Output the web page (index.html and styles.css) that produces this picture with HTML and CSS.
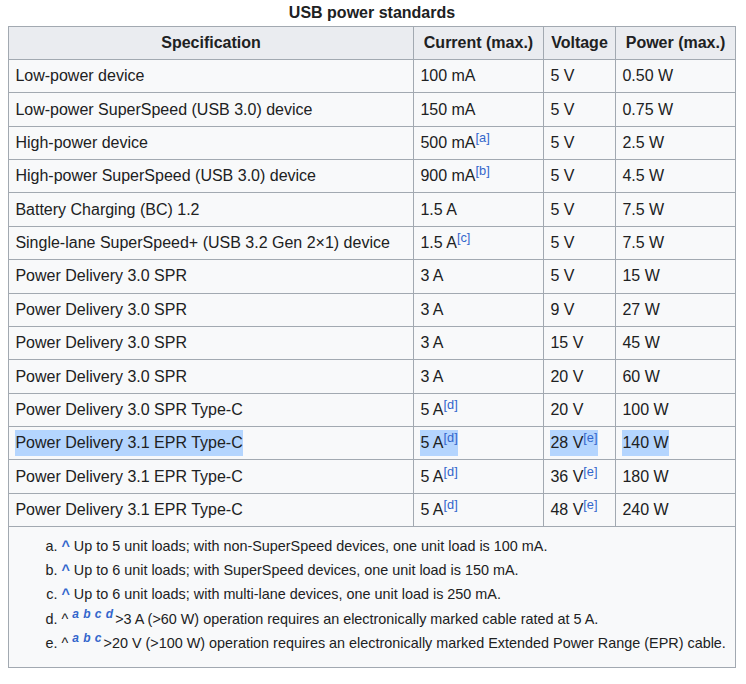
FILE: index.html
```html
<!DOCTYPE html>
<html>
<head>
<meta charset="utf-8">
<link rel="stylesheet" href="styles.css">
</head>
<body>
<table class="wikitable">
  <caption>USB power standards</caption>
  <thead>
    <tr>
      <th class="c1">Specification</th>
      <th class="c2">Current (max.)</th>
      <th class="c3">Voltage</th>
      <th class="c4">Power (max.)</th>
    </tr>
  </thead>
  <tbody>
    <tr><td>Low-power device</td><td>100 mA</td><td>5 V</td><td>0.50 W</td></tr>
    <tr><td>Low-power SuperSpeed (USB 3.0) device</td><td>150 mA</td><td>5 V</td><td>0.75 W</td></tr>
    <tr><td>High-power device</td><td>500 mA<sup class="ref">[a]</sup></td><td>5 V</td><td>2.5 W</td></tr>
    <tr><td>High-power SuperSpeed (USB 3.0) device</td><td>900 mA<sup class="ref">[b]</sup></td><td>5 V</td><td>4.5 W</td></tr>
    <tr><td>Battery Charging (BC) 1.2</td><td>1.5 A</td><td>5 V</td><td>7.5 W</td></tr>
    <tr><td>Single-lane SuperSpeed+ (USB 3.2 Gen 2×1) device</td><td>1.5 A<sup class="ref">[c]</sup></td><td>5 V</td><td>7.5 W</td></tr>
    <tr><td>Power Delivery 3.0 SPR</td><td>3 A</td><td>5 V</td><td>15 W</td></tr>
    <tr><td>Power Delivery 3.0 SPR</td><td>3 A</td><td>9 V</td><td>27 W</td></tr>
    <tr><td>Power Delivery 3.0 SPR</td><td>3 A</td><td>15 V</td><td>45 W</td></tr>
    <tr><td>Power Delivery 3.0 SPR</td><td>3 A</td><td>20 V</td><td>60 W</td></tr>
    <tr><td>Power Delivery 3.0 SPR Type-C</td><td>5 A<sup class="ref">[d]</sup></td><td>20 V</td><td>100 W</td></tr>
    <tr><td><span class="sel">Power Delivery 3.1 EPR Type-C</span></td><td><span class="sel">5 A<sup class="ref">[d]</sup></span></td><td><span class="sel">28 V<sup class="ref">[e]</sup></span></td><td><span class="sel">140 W</span></td></tr>
    <tr><td>Power Delivery 3.1 EPR Type-C</td><td>5 A<sup class="ref">[d]</sup></td><td>36 V<sup class="ref">[e]</sup></td><td>180 W</td></tr>
    <tr><td>Power Delivery 3.1 EPR Type-C</td><td>5 A<sup class="ref">[d]</sup></td><td>48 V<sup class="ref">[e]</sup></td><td>240 W</td></tr>
  </tbody>
  <tfoot>
    <tr>
      <td colspan="4" class="notes-cell">
        <ol class="notes">
          <li><span class="caret">^</span> Up to 5 unit loads; with non-SuperSpeed devices, one unit load is 100 mA.</li>
          <li><span class="caret">^</span> Up to 6 unit loads; with SuperSpeed devices, one unit load is 150 mA.</li>
          <li><span class="caret">^</span> Up to 6 unit loads; with multi-lane devices, one unit load is 250 mA.</li>
          <li>^ <sup class="back">a b c d</sup>&gt;3 A (&gt;60 W) operation requires an electronically marked cable rated at 5 A.</li>
          <li>^ <sup class="back">a b c</sup>&gt;20 V (&gt;100 W) operation requires an electronically marked Extended Power Range (EPR) cable.</li>
        </ol>
      </td>
    </tr>
  </tfoot>
</table>
</body>
</html>
```

FILE: styles.css
```css
html, body {
  margin: 0;
  padding: 0;
  background: #ffffff;
}
body {
  margin: 0 8px;
  font-family: "Liberation Sans", Arial, sans-serif;
  font-size: 16px;
  color: #202122;
}
.wikitable {
  border-collapse: collapse;
  table-layout: fixed;
  width: 727px;
  background: #f8f9fa;
  color: #202122;
  border: 1px solid #a2a9b1;
}
.wikitable caption {
  font-weight: bold;
  line-height: 25.6px;
  text-align: center;
}
.wikitable th,
.wikitable td {
  box-sizing: border-box;
  border: 1px solid #a2a9b1;
  padding: 3.2px 6.4px;
  line-height: 26px;
  text-align: left;
  vertical-align: middle;
}
.wikitable th {
  background: #eaecf0;
  font-weight: bold;
  text-align: center;
}
.c1 { width: 405px; }
.c2 { width: 130px; }
.c3 { width: 72px; }
.c4 { width: 120px; }
.ref {
  font-size: 12.8px;
  line-height: 1;
  color: #3366cc;
  vertical-align: super;
}
.sel {
  display: inline-block;
  background: #b4d5fe;
  line-height: 26px;
}
.wikitable .notes-cell {
  padding: 3.2px 6.4px 8px;
}
.notes {
  list-style-type: lower-alpha;
  margin: 4.3px 0 4px 46px;
  padding: 0;
  font-size: 14.4px;
  line-height: 23px;
}
.notes li {
  margin-bottom: 1.4px;
}
.caret {
  color: #3366cc;
  font-weight: bold;
}
.back {
  color: #3366cc;
  font-weight: bold;
  font-style: italic;
  font-size: 12px;
  word-spacing: 1px;
  line-height: 1;
  vertical-align: super;
  margin-right: 2px;
}
```
